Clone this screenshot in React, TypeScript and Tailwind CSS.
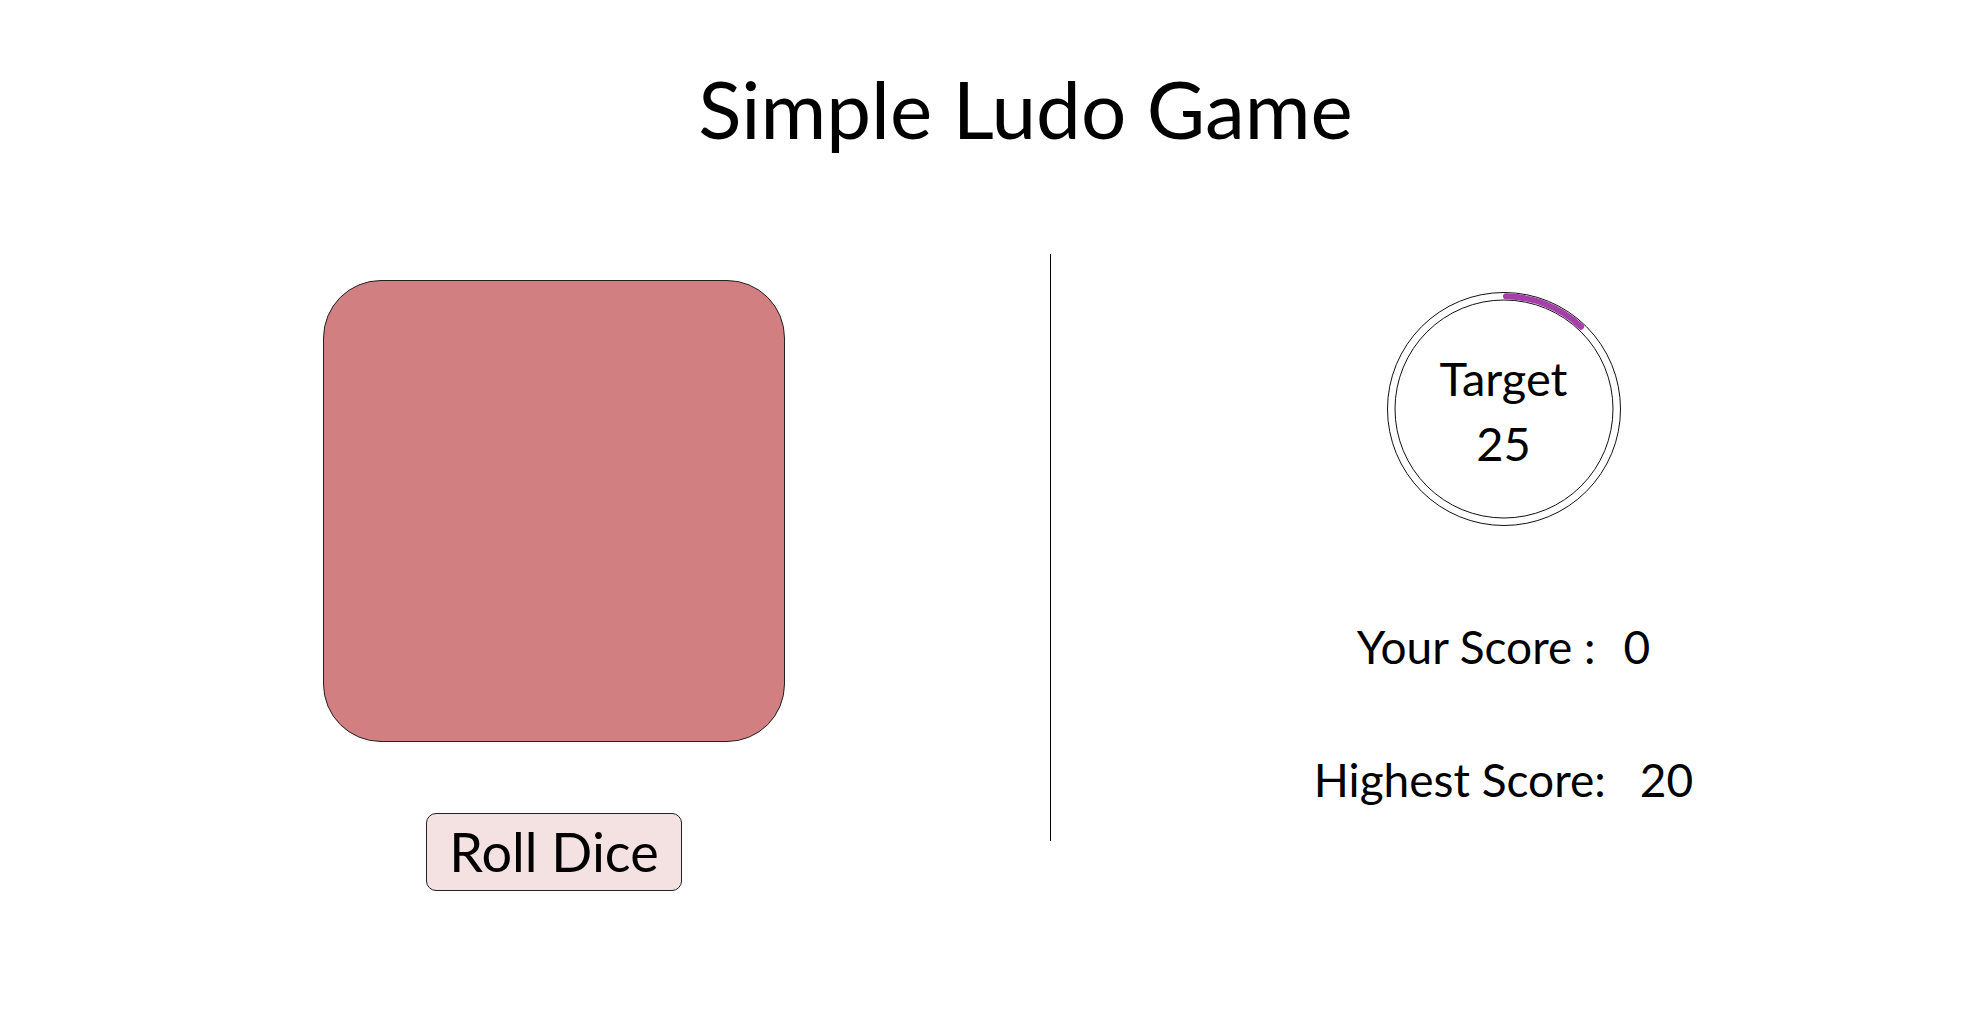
import React, { useState } from 'react';

const TargetRing: React.FC<{ target: number; progress: number }> = ({ target, progress }) => {
  const r = 112.75;
  const c = 2 * Math.PI * r;
  return (
    <div className="relative w-[236px] h-[236px] flex flex-col items-center pt-[55px]">
      <svg className="absolute inset-0" width="236" height="236" viewBox="0 0 236 236">
        <circle cx="118" cy="118" r="116.5" fill="white" stroke="#111" strokeWidth="1" />
        <circle cx="118" cy="118" r="109" fill="white" stroke="#111" strokeWidth="1" />
        <circle
          cx="118"
          cy="118"
          r={r}
          fill="none"
          stroke="#a63fa9"
          strokeWidth="6"
          strokeLinecap="round"
          strokeDasharray={`${c * progress} ${c}`}
          transform="rotate(-89 118 118)"
        />
      </svg>
      <div className="relative text-center text-[47px] leading-[65px]">
        <div>Target</div>
        <div>{target}</div>
      </div>
    </div>
  );
};

const App: React.FC = () => {
  const [score] = useState(0);
  const [highest] = useState(20);

  return (
    <div className="min-h-screen bg-white text-black font-['Lato','Open_Sans',sans-serif]">
      <h1 className="pt-[68px] pl-[71px] text-center text-[80px] leading-none font-normal">Simple Ludo Game</h1>

      <div className="mt-[106px] flex">
        <div className="w-[1050px] pl-[58px] flex flex-col items-center">
          <div className="mt-[26px] w-[462px] h-[462px] rounded-[58px] border border-[#222] bg-[#d17f80]" />
          <button
            type="button"
            className="mt-[71px] w-[256px] h-[78px] rounded-[10px] border border-[#222] bg-[#f4e1e2] text-[54px] leading-none flex items-center justify-center"
          >
            Roll Dice
          </button>
        </div>

        <div className="w-px h-[587px] bg-black" />

        <div className="flex-1 pr-[24px] flex flex-col items-center">
          <div className="mt-[37px]">
            <TargetRing target={25} progress={0.117} />
          </div>
          <div className="mt-[97px] text-[46px] leading-none flex">
            <span>Your Score :</span>
            <span className="ml-[28px]">{score}</span>
          </div>
          <div className="mt-[87px] text-[46px] leading-none flex">
            <span>Highest Score:</span>
            <span className="ml-[34px]">{highest}</span>
          </div>
        </div>
      </div>
    </div>
  );
};

export default App;
